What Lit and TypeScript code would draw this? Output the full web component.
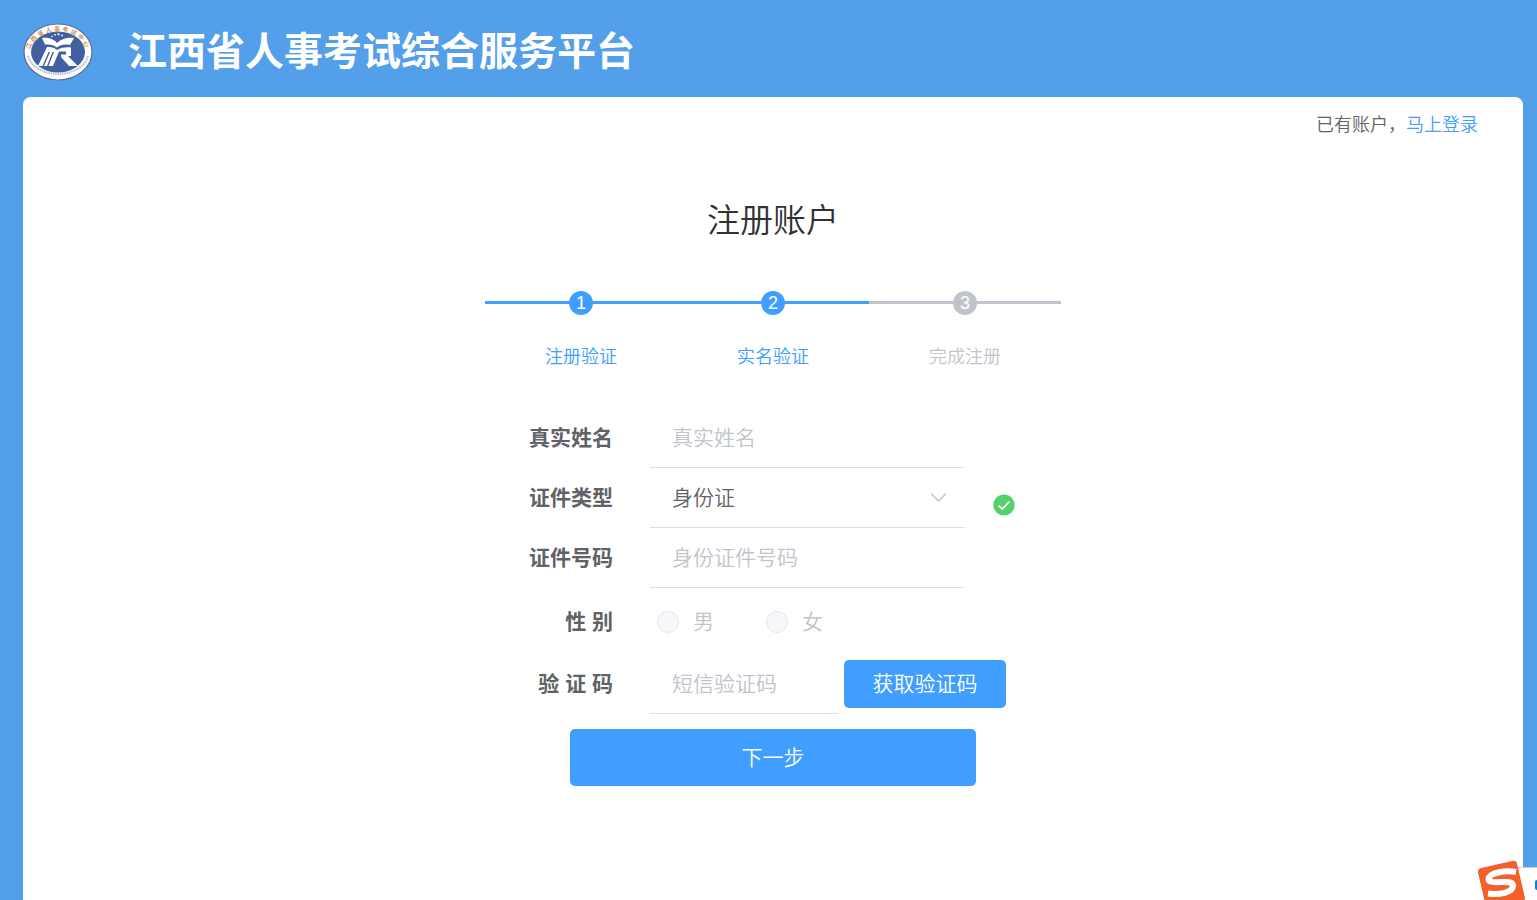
import { LitElement, html, css } from "lit";
import { customElement, property, state } from "lit/decorators.js";
import { classMap } from "lit/directives/class-map.js";

@customElement("site-logo")
class SiteLogo extends LitElement {
  static styles = css`
    :host { display: block; width: 70px; height: 58px; }
    svg { display: block; width: 100%; height: 100%; }
    .ring-text { font: 700 6px "Noto Sans CJK SC", sans-serif; fill: #d09050; letter-spacing: 2px; }
  `;
  render() {
    return html`
      <svg viewBox="0 0 70 58" role="img" aria-label="江西省人事考试中心">
        <defs><path id="arc" d="M6.500 31 A28.500 23 0 0 1 63.500 31" /></defs>
        <ellipse cx="35" cy="29" rx="34" ry="28" fill="#fdfdfd" stroke="#5b6f9c" stroke-width="1.2" />
        <path d="M5 33 A30.500 22 0 0 0 65 33" fill="none" stroke="#7384ad" stroke-width="2"
          stroke-dasharray="1.3 1" opacity="0.6" />
        <ellipse cx="35" cy="29" rx="27" ry="20.5" fill="#40609f" />
        <text class="ring-text" text-anchor="middle"><textPath href="#arc" startOffset="50%">江西省人事考试中心</textPath></text>
        <path d="M19 15 C25 14 31 16 34 20 C38 16 44 14 51 15 L47 22 C41 21 37 22 34 24.500 C31 22 27 21 22 21.500Z" fill="#fff" />
        <path d="M24 24 C28 23.500 31 24.500 34 27 C38 24.500 43 24 48 24.500 V33 H45 L55 43 H46 L38 34 V31.500 H43 V28.500 H36 L30 43 H25.500 L31 29 H29.500 L24 43 H21 L27 29 H25.500 L19.500 43 H15Z" fill="#fff" />
        <g fill="#fff"><circle cx="29" cy="13.5" r="0.8" /><circle cx="32" cy="11.8" r="0.9" /><circle cx="35.500" cy="11.3" r="1.1" /><circle cx="39" cy="12.5" r="0.9" /></g>
      </svg>`;
  }
}

@customElement("step-bar")
class StepBar extends LitElement {
  @property({ type: Number }) current = 1;
  @property({ attribute: false }) steps: string[] = [];
  static styles = css`
    :host { display: block; }
    .steps { display: flex; margin: 0; padding: 0; list-style: none; }
    .step { flex: 1; color: #c0c4cc; text-align: center; }
    .step.done { color: #409eff; }
    .head { display: flex; align-items: flex-start; }
    .line { flex: 1; height: 3px; margin-top: 10px; background: currentColor; }
    .dot { width: 24px; height: 24px; border-radius: 50%; background: currentColor; }
    .num { display: block; color: #fff; font: 18px/24px "Liberation Sans", sans-serif; }
    .name { margin-top: 30px; font-size: 18px; line-height: 24px; }
  `;
  render() {
    return html`<ol class="steps">
      ${this.steps.map((name, i) => html`
        <li class=${classMap({ step: true, done: i < this.current })}>
          <div class="head">
            <span class="line"></span>
            <span class="dot"><span class="num">${i + 1}</span></span>
            <span class="line"></span>
          </div>
          <div class="name">${name}</div>
        </li>`)}
    </ol>`;
  }
}

@customElement("ime-badge")
class ImeBadge extends LitElement {
  static styles = css`
    :host { position: fixed; right: 0; bottom: 0; display: block; width: 62px; height: 42px; overflow: hidden; }
    svg { display: block; }
  `;
  render() {
    return html`<svg width="62" height="42" viewBox="0 0 62 42" aria-hidden="true">
      <rect x="24" y="9.5" width="50" height="50" fill="#fff" stroke="#c9d0d8" />
      <rect x="60" y="22" width="8" height="10" rx="2" fill="#0a7be0" />
      <g transform="rotate(-13 26 25)">
        <rect x="6" y="6" width="40" height="42" rx="4" fill="#f4602a" />
      </g>
      <path d="M41 14 C30 12 14 15 13.500 21 C13 28 38 20 38 27.500 C38 35 24 37 13 35.500" fill="none" stroke="#fff" stroke-width="6" />
    </svg>`;
  }
}

@customElement("app-root")
class AppRoot extends LitElement {
  @state() private idType = "身份证";

  static styles = css`
    * { box-sizing: border-box; }
    :host {
      display: flex; flex-direction: column; min-height: 100vh; padding: 0 14px 0 23px;
      box-sizing: border-box; background: #539fe9; color: #606266;
      font-family: "Liberation Sans", "Noto Sans CJK SC", sans-serif; font-weight: 350;
    }
    .top { display: flex; align-items: center; gap: 35px; height: 97px; padding-bottom: 6px; padding-top: 12px; }
    .brand { margin: 0; color: #fff; font-size: 39px; line-height: 48px; font-weight: 700; }
    .card { flex: 1; padding: 16px 45px 0; background: #fff; border-radius: 8px 8px 0 0; }
    .login { text-align: right; font-size: 18px; line-height: 24px; }
    .login a { color: #409eff; text-decoration: none; }
    .panel { max-width: 576px; margin: 60px auto 0; }
    .title { margin: 0 0 46px; color: #303133; font-size: 33px; line-height: 48px; font-weight: 350; text-align: center; }
    .form { margin-top: 39px; }
    .row { display: grid; grid-template-columns: 128px 1fr; column-gap: 37px; align-items: center; height: 60px; font-size: 21px; line-height: 24px; }
    .row.tall { height: 66px; padding-top: 2px; }
    .label { text-align: right; font-weight: 700; color: #606266; }
    .field { display: flex; align-items: center; height: 60px; }
    .box { position: relative; width: 315px; height: 60px; }
    .box.short { width: 188px; }
    .control {
      display: block; width: 100%; height: 100%; padding: 0 22px; margin: 0; border: 0;
      border-bottom: 1px solid #dcdfe6; border-radius: 0; outline: 0; background: transparent;
      color: #606266; font: inherit; appearance: none;
    }
    .control::placeholder { color: #c0c4cc; opacity: 1; }
    .chevron { position: absolute; right: 18px; top: 24px; pointer-events: none; }
    .ok { align-self: flex-end; margin: 0 0 12px 28px; }
    .radios { display: flex; gap: 52px; padding-left: 7px; color: #c0c4cc; }
    .radio { display: flex; align-items: center; gap: 14px; }
    .radio input { width: 22px; height: 22px; margin: 0; appearance: none; border: 1px solid #e4e7ed; border-radius: 50%; background: #f5f7fa; }
    .btn { border: 0; border-radius: 5px; background: #409eff; color: #fff; font: inherit; font-size: 21px; line-height: 24px; cursor: pointer; }
    .code { width: 162px; height: 48px; margin-left: 6px; padding: 0; }
    .next { display: block; width: 406px; height: 57px; margin: 15px auto 0; }
  `;

  render() {
    return html`
      <header class="top">
        <site-logo></site-logo>
        <h1 class="brand">江西省人事考试综合服务平台</h1>
      </header>
      <main class="card">
        <div class="login">已有账户，<a href="#login">马上登录</a></div>
        <section class="panel">
          <h2 class="title">注册账户</h2>
          <step-bar .steps=${["注册验证", "实名验证", "完成注册"]} .current=${2}></step-bar>
          <form class="form" @submit=${(e: Event) => e.preventDefault()}>
            <div class="row">
              <label class="label" for="name">真实姓名</label>
              <div class="field"><div class="box"><input class="control" id="name" placeholder="真实姓名" /></div></div>
            </div>
            <div class="row">
              <label class="label" for="type">证件类型</label>
              <div class="field">
                <div class="box">
                  <select class="control" id="type" .value=${this.idType}
                    @change=${(e: Event) => (this.idType = (e.target as HTMLSelectElement).value)}>
                    <option>身份证</option>
                  </select>
                  <svg class="chevron" width="17" height="11" viewBox="0 0 17 11" aria-hidden="true">
                    <path d="M1 1.5 8.5 9 16 1.5" fill="none" stroke="#c0c4cc" stroke-width="1.5" />
                  </svg>
                </div>
                <svg class="ok" width="22" height="22" viewBox="0 0 22 22" aria-hidden="true">
                  <circle cx="11" cy="11" r="10.6" fill="#56d06a" />
                  <path d="M5.6 11.6 9.3 15 16.4 7.6" fill="none" stroke="#fff" stroke-width="1.7" />
                </svg>
              </div>
            </div>
            <div class="row">
              <label class="label" for="number">证件号码</label>
              <div class="field"><div class="box"><input class="control" id="number" placeholder="身份证件号码" /></div></div>
            </div>
            <div class="row tall" role="radiogroup" aria-labelledby="sex">
              <span class="label" id="sex">性 别</span>
              <div class="radios">
                <label class="radio"><input type="radio" name="sex" disabled />男</label>
                <label class="radio"><input type="radio" name="sex" disabled />女</label>
              </div>
            </div>
            <div class="row">
              <label class="label" for="code">验 证 码</label>
              <div class="field">
                <div class="box short"><input class="control" id="code" placeholder="短信验证码" /></div>
                <button class="btn code" type="button">获取验证码</button>
              </div>
            </div>
            <button class="btn next" type="submit">下一步</button>
          </form>
        </section>
      </main>
      <ime-badge></ime-badge>
    `;
  }
}
